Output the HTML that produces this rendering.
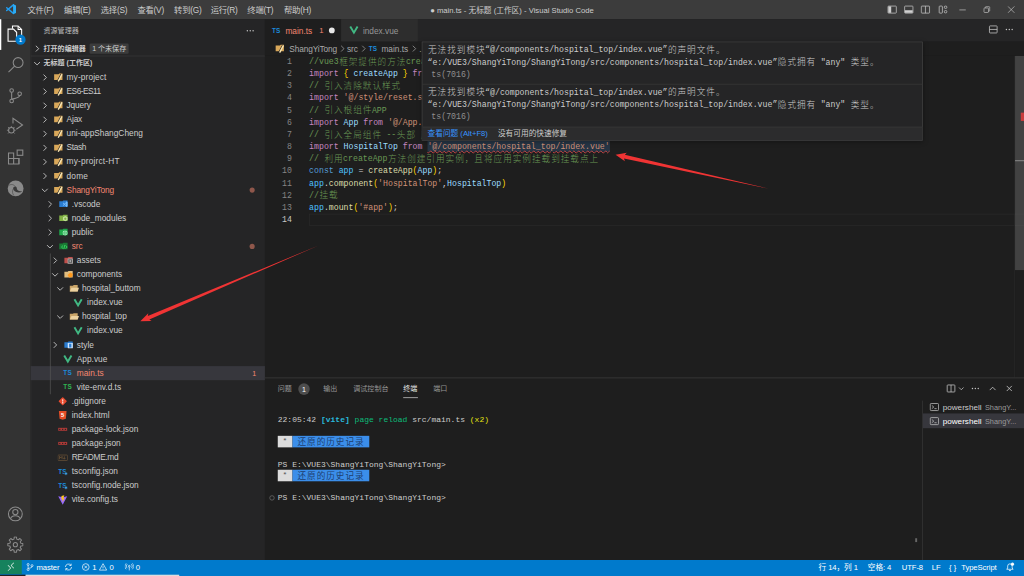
<!DOCTYPE html>
<html lang="zh-CN"><head><meta charset="utf-8"><title>main.ts - Visual Studio Code</title>
<style>
*{box-sizing:border-box;margin:0;padding:0}
html,body{width:1024px;height:576px;overflow:hidden;background:#1e1e1e}
body{font-family:"Liberation Sans","Noto Sans CJK SC",sans-serif;font-size:13px;color:#ccc}
#root{position:absolute;left:0;top:0;width:1600px;height:900px;transform:scale(.64);transform-origin:0 0;overflow:hidden;background:#1e1e1e}
.abs{position:absolute}
.mono{font-family:"Liberation Mono","Noto Sans CJK SC",monospace}
#title{position:absolute;left:0;top:0;width:1600px;height:30px;background:#3c3c3c;color:#ccc}
#title .menu{position:absolute;top:0;height:30px;line-height:31px;font-size:13px;white-space:nowrap;letter-spacing:-.4px}
#title .wt{position:absolute;top:0;left:0;width:1600px;text-align:center;line-height:32px;font-size:12px;color:#ccc;white-space:nowrap}
#act{position:absolute;left:0;top:30px;width:48px;height:845px;background:#333}
#side{position:absolute;left:48px;top:30px;width:366px;height:845px;background:#252526}
.row{position:absolute;left:0;width:366px;height:22px;line-height:22px;white-space:nowrap;font-size:13px;color:#ccc}
.row .lb{position:absolute;top:0}
.row .ic{position:absolute;top:3px;width:16px;height:16px}
.row .tw{position:absolute;top:3px;width:16px;height:16px}
#tabs{position:absolute;left:414px;top:30px;width:1186px;height:35px;background:#252526}
.tab{position:absolute;top:0;height:35px;line-height:37px;font-size:13px;white-space:nowrap}
#bc{position:absolute;left:414px;top:65px;width:1186px;height:22px;background:#1e1e1e;line-height:24px;font-size:13px;color:#a9a9a9;white-space:nowrap}
#ed{position:absolute;left:414px;top:87px;width:1186px;height:503px;background:#1e1e1e;overflow:hidden}
.ln{position:absolute;left:0;width:42px;text-align:right;height:19px;line-height:20px;font-size:12.8px;color:#858585;letter-spacing:-.02px}
.cl{position:absolute;left:69px;height:19px;line-height:20px;font-size:12.83px;white-space:pre;color:#d4d4d4}
.cl .cj{font-family:"Noto Sans CJK SC",sans-serif;font-weight:300;font-size:13.5px;position:relative;top:-1px;display:inline-block;width:15px;text-align:center;line-height:19px;vertical-align:top}
.k{color:#c586c0}.c{color:#6a9955}.v{color:#9cdcfe}.s{color:#ce9178}.f{color:#dcdcaa}.b{color:#569cd6}.g{color:#ffd700}.n{color:#4fc1ff}
#hover{position:absolute;left:659px;top:65px;width:783px;height:155px;background:#252526;border:1px solid #454545;color:#ccc;box-shadow:0 2px 8px rgba(0,0,0,.36)}
.hl{position:absolute;left:8px;height:19px;line-height:19px;font-size:12.83px;white-space:pre;color:#ccc}
.hl .cj{font-family:"Noto Sans CJK SC",sans-serif;font-weight:300;font-size:13.5px;position:relative;top:-1px;display:inline-block;width:15px;text-align:center;vertical-align:top}
#panel{position:absolute;left:414px;top:590px;width:1186px;height:285px;background:#1e1e1e;border-top:1px solid #444}
.pt{position:absolute;top:0;height:35px;line-height:33px;font-size:11px;color:#969696;white-space:nowrap}
.tl{position:absolute;left:20px;height:17.6px;line-height:17.6px;font-size:12.5px;white-space:pre;color:#ccc}
.tl .cj{font-family:"Noto Sans CJK SC",sans-serif;font-size:13.5px;display:inline-block;width:15px;height:17.6px;line-height:16.600px;text-align:center;vertical-align:top}
.tl .bg{display:inline-block;height:17.6px;line-height:17.6px;vertical-align:top}
#status{position:absolute;left:0;top:875px;width:1600px;height:25px;letter-spacing:-.15px;background:#007acc;color:#fff;font-size:12px;line-height:22px;white-space:nowrap}
#status .it{position:absolute;top:0;height:22px}
</style></head>
<body>
<div id="root">
<div id="title">
<svg class="abs" style="left:8.800px;top:6.300px" width="16.600" height="16.600" viewBox="0 0 100 100"><path d="M72 10L9 63M72 90L9 37" stroke="#1f9cf0" stroke-width="14" fill="none" stroke-linecap="round"/><path fill="#2aacf6" d="M69 2L97 15V85L69 98Z"/></svg>
<div class="menu" style="left:43.0px">文件(F)</div><div class="menu" style="left:100.2px">编辑(E)</div><div class="menu" style="left:157.5px">选择(S)</div><div class="menu" style="left:214.8px">查看(V)</div><div class="menu" style="left:272.0px">转到(G)</div><div class="menu" style="left:329.2px">运行(R)</div><div class="menu" style="left:386.5px">终端(T)</div><div class="menu" style="left:443.8px">帮助(H)</div>
<div class="wt">● main.ts - 无标题 (工作区) - Visual Studio Code</div>
<svg class="abs" style="left:1386px;top:7px" width="16" height="16" viewBox="0 0 16 16" fill="none" stroke="#d0d0d0" stroke-width="1.1"><rect x="1.5" y="2.5" width="13" height="11" rx="1"/><rect x="2" y="3" width="4.5" height="10" fill="#d0d0d0" stroke="none"/></svg><svg class="abs" style="left:1412px;top:7px" width="16" height="16" viewBox="0 0 16 16" fill="none" stroke="#d0d0d0" stroke-width="1.1"><rect x="1.5" y="2.5" width="13" height="11" rx="1"/><rect x="2" y="9" width="12" height="4" fill="#d0d0d0" stroke="none"/></svg><svg class="abs" style="left:1438px;top:7px" width="16" height="16" viewBox="0 0 16 16" fill="none" stroke="#d0d0d0" stroke-width="1.1"><rect x="1.5" y="2.5" width="13" height="11" rx="1"/><path d="M8 2.5V13.5"/></svg><svg class="abs" style="left:1465px;top:7px" width="16" height="16" viewBox="0 0 16 16" fill="none" stroke="#d0d0d0" stroke-width="1.1"><rect x="2.5" y="2.5" width="5" height="11" rx="1"/><rect x="10.5" y="2.5" width="4" height="3.6" rx="1.5"/><rect x="10.5" y="9.5" width="4" height="3.6" rx="1.5"/></svg><svg class="abs" style="left:1498px;top:9px" width="12" height="12" viewBox="0 0 12 12" stroke="#ccc" stroke-width="1" fill="none"><path d="M1 6.5H11"/></svg><svg class="abs" style="left:1536px;top:9px" width="12" height="12" viewBox="0 0 12 12" stroke="#ccc" stroke-width="1" fill="none"><rect x="1.5" y="3.5" width="7" height="7" rx="1"/><path d="M3.5 3.5V2.5a1 1 0 0 1 1-1H9.5a1 1 0 0 1 1 1V7.5a1 1 0 0 1 -1 1H8.5"/></svg><svg class="abs" style="left:1574px;top:9px" width="12" height="12" viewBox="0 0 12 12" stroke="#ccc" stroke-width="1" fill="none"><path d="M1 1L11 11M11 1L1 11"/></svg>
</div>
<div id="act">
<div class="abs" style="left:0;top:0;width:2px;height:48px;background:#fff"></div>
<svg class="abs" style="left:0;top:0" width="48" height="320" viewBox="0 0 48 320" fill="none" stroke="#8a8a8a" stroke-width="1.700"><path stroke="#fff" d="M19.500 15V10.600H28.300L33.800 16.100V30.600H26.200"/><path stroke="#fff" d="M28.300 10.600V16.100H33.800"/><path stroke="#fff" d="M12.600 15.500H21L26 20.500V34.500H12.600Z"/><circle cx="28.300" cy="67.800" r="7.700"/><path d="M22.800 73.300L13.300 82.800"/><circle cx="18.200" cy="111.400" r="2.800"/><circle cx="18.200" cy="127.800" r="2.800"/><circle cx="30.700" cy="116.600" r="2.800"/><path d="M18.200 114.200V125M30.700 119.400C30.700 123 24 123.500 18.800 125"/><path d="M20.300 163V154.900L35.200 165.300L25.500 172"/><circle cx="17.700" cy="173.500" r="4.300"/><path d="M17.700 169.200V166.800M13.400 173.500H10.800M22 173.500H24.600M14.600 170.400L12.600 168.400M20.800 170.400L22.800 168.400M14.600 176.600L12.600 178.600M20.800 176.600L22.800 178.600" stroke-width="1.300"/><path d="M13.300 209H21.300V226.200H13.300ZM13.300 217.600H29.600V226.200H21.300"/><path d="M21.300 217.600H29.600V226.200"/><rect x="26.800" y="204.500" width="8.800" height="8.200"/></svg>
<div class="abs" style="left:24px;top:24px;width:16px;height:16px;border-radius:8px;background:#007acc;color:#fff;font-size:9px;line-height:16px;text-align:center;font-weight:bold">1</div>
<svg class="abs" style="left:6.250px;top:245px" width="37.500" height="37.500" viewBox="0 0 24 24"><circle cx="11.800" cy="12.400" r="7.900" fill="#8a8a8a"/><path fill="#3a3a3a" d="M9.300 12.600C9.300 11 10.800 10.200 12.200 10.800C13 11.200 13 12.200 13.100 13C13.400 14.600 15.500 15.600 18.700 15.500C16.500 16.900 13.500 16.700 11.800 15.700C10.300 14.800 9.300 13.800 9.300 12.600Z"/><path fill="none" stroke="#444" stroke-width=".600" d="M4.600 9.700C6.500 8.100 9.500 8 11.300 10.300M9.300 13C8.300 15 8.500 17.500 9.900 19.300"/></svg>
<svg class="abs" style="left:10px;top:759px" width="28" height="28" viewBox="0 0 24 24" fill="none" stroke="#8a8a8a" stroke-width="1.450"><circle cx="12" cy="12" r="9.25"/><circle cx="12" cy="9.5" r="3.5"/><path d="M5.500 18.500C6.500 15.500 9 14.500 12 14.500S17.500 15.500 18.500 18.500"/></svg>
<svg class="abs" style="left:11px;top:808px" width="26" height="26" viewBox="0 0 24 24" fill="none" stroke="#8a8a8a" stroke-width="1.500" stroke-linejoin="round"><circle cx="12" cy="12" r="3"/><path d="M19.96 10.02L22.88 10.36L22.88 13.64L19.96 13.98L19.03 16.23L20.85 18.54L18.54 20.85L16.23 19.03L13.98 19.96L13.64 22.88L10.36 22.88L10.02 19.96L7.77 19.03L5.46 20.85L3.15 18.54L4.97 16.23L4.04 13.98L1.12 13.64L1.12 10.36L4.04 10.02L4.97 7.77L3.15 5.46L5.46 3.15L7.77 4.97L10.02 4.04L10.36 1.12L13.64 1.12L13.98 4.04L16.23 4.97L18.54 3.15L20.85 5.46L19.03 7.77Z"/></svg>
</div>
<div id="side">
<div class="abs" style="left:0;top:0;width:1px;height:845px;background:#303031"></div>
<div class="abs" style="left:20px;top:0;height:35px;line-height:35px;font-size:11px;color:#bbb">资源管理器</div>
<svg class="abs" style="left:335px;top:10px" width="16" height="16" viewBox="0 0 16 16" fill="#c5c5c5"><circle cx="3.500" cy="8" r="1.100"/><circle cx="8" cy="8" r="1.100"/><circle cx="12.500" cy="8" r="1.100"/></svg>
<div class="row" style="top:35px;font-size:11px;font-weight:bold;color:#ccc"><svg class="tw" style="left:2px" viewBox="0 0 16 16" fill="none" stroke="#c8c8c8" stroke-width="1.400"><path d="M6 3.500L10.500 8L6 12.500"/></svg><span class="lb" style="left:20px">打开的编辑器</span><span class="abs" style="left:92px;top:3px;height:16px;line-height:16px;padding:0 4px;background:#3c3c3c;color:#ccc;font-weight:normal;font-size:11px;border-radius:2px">1 个未保存</span></div>
<div class="abs" style="left:0;top:57px;width:366px;height:1px;background:#3a3a3b"></div>
<div class="row" style="top:58px;line-height:20px;font-size:11px;font-weight:bold;color:#ccc"><svg class="tw" style="left:2px" viewBox="0 0 16 16" fill="none" stroke="#c8c8c8" stroke-width="1.400"><path d="M3.500 6L8 10.500L12.500 6"/></svg><span class="lb" style="left:20px">无标题 (工作区)</span></div>
<div class="row" style="top:80px"><svg class="tw" style="left:14px" viewBox="0 0 16 16" fill="none" stroke="#c8c8c8" stroke-width="1.400"><path d="M6 3.500L10.500 8L6 12.500"/></svg><svg class="ic" style="left:36px" viewBox="0 0 16 16"><path fill="#d9a85a" d="M.6 3.200H7.500L8.500 2H13.600V12H.6Z"/><path stroke="#252526" stroke-width="1.400" d="M11.300 2.600L5.900 13"/><path stroke="#f8e6b4" stroke-width="2.100" d="M12.800 3L7 14.200"/></svg><span class="lb" style="left:56px;color:#ccc;letter-spacing:0.18px">my-project</span></div>
<div class="row" style="top:102px"><svg class="tw" style="left:14px" viewBox="0 0 16 16" fill="none" stroke="#c8c8c8" stroke-width="1.400"><path d="M6 3.500L10.500 8L6 12.500"/></svg><svg class="ic" style="left:36px" viewBox="0 0 16 16"><path fill="#d9a85a" d="M.6 3.200H7.500L8.500 2H13.600V12H.6Z"/><path stroke="#252526" stroke-width="1.400" d="M11.300 2.600L5.900 13"/><path stroke="#f8e6b4" stroke-width="2.100" d="M12.800 3L7 14.200"/></svg><span class="lb" style="left:56px;color:#ccc;letter-spacing:-0.80px">ES6-ES11</span></div>
<div class="row" style="top:124px"><svg class="tw" style="left:14px" viewBox="0 0 16 16" fill="none" stroke="#c8c8c8" stroke-width="1.400"><path d="M6 3.500L10.500 8L6 12.500"/></svg><svg class="ic" style="left:36px" viewBox="0 0 16 16"><path fill="#d9a85a" d="M.6 3.200H7.500L8.500 2H13.600V12H.6Z"/><path stroke="#252526" stroke-width="1.400" d="M11.300 2.600L5.900 13"/><path stroke="#f8e6b4" stroke-width="2.100" d="M12.800 3L7 14.200"/></svg><span class="lb" style="left:56px;color:#ccc;letter-spacing:-0.23px">Jquery</span></div>
<div class="row" style="top:146px"><svg class="tw" style="left:14px" viewBox="0 0 16 16" fill="none" stroke="#c8c8c8" stroke-width="1.400"><path d="M6 3.500L10.500 8L6 12.500"/></svg><svg class="ic" style="left:36px" viewBox="0 0 16 16"><path fill="#d9a85a" d="M.6 3.200H7.500L8.500 2H13.600V12H.6Z"/><path stroke="#252526" stroke-width="1.400" d="M11.300 2.600L5.900 13"/><path stroke="#f8e6b4" stroke-width="2.100" d="M12.800 3L7 14.200"/></svg><span class="lb" style="left:56px;color:#ccc;letter-spacing:-0.25px">Ajax</span></div>
<div class="row" style="top:168px"><svg class="tw" style="left:14px" viewBox="0 0 16 16" fill="none" stroke="#c8c8c8" stroke-width="1.400"><path d="M6 3.500L10.500 8L6 12.500"/></svg><svg class="ic" style="left:36px" viewBox="0 0 16 16"><path fill="#d9a85a" d="M.6 3.200H7.500L8.500 2H13.600V12H.6Z"/><path stroke="#252526" stroke-width="1.400" d="M11.300 2.600L5.900 13"/><path stroke="#f8e6b4" stroke-width="2.100" d="M12.800 3L7 14.200"/></svg><span class="lb" style="left:56px;color:#ccc">uni-appShangCheng</span></div>
<div class="row" style="top:190px"><svg class="tw" style="left:14px" viewBox="0 0 16 16" fill="none" stroke="#c8c8c8" stroke-width="1.400"><path d="M6 3.500L10.500 8L6 12.500"/></svg><svg class="ic" style="left:36px" viewBox="0 0 16 16"><path fill="#d9a85a" d="M.6 3.200H7.500L8.500 2H13.600V12H.6Z"/><path stroke="#252526" stroke-width="1.400" d="M11.300 2.600L5.900 13"/><path stroke="#f8e6b4" stroke-width="2.100" d="M12.800 3L7 14.200"/></svg><span class="lb" style="left:56px;color:#ccc;letter-spacing:-0.60px">Stash</span></div>
<div class="row" style="top:212px"><svg class="tw" style="left:14px" viewBox="0 0 16 16" fill="none" stroke="#c8c8c8" stroke-width="1.400"><path d="M6 3.500L10.500 8L6 12.500"/></svg><svg class="ic" style="left:36px" viewBox="0 0 16 16"><path fill="#d9a85a" d="M.6 3.200H7.500L8.500 2H13.600V12H.6Z"/><path stroke="#252526" stroke-width="1.400" d="M11.300 2.600L5.900 13"/><path stroke="#f8e6b4" stroke-width="2.100" d="M12.800 3L7 14.200"/></svg><span class="lb" style="left:56px;color:#ccc;letter-spacing:0.27px">my-projrct-HT</span></div>
<div class="row" style="top:234px"><svg class="tw" style="left:14px" viewBox="0 0 16 16" fill="none" stroke="#c8c8c8" stroke-width="1.400"><path d="M6 3.500L10.500 8L6 12.500"/></svg><svg class="ic" style="left:36px" viewBox="0 0 16 16"><path fill="#d9a85a" d="M.6 3.200H7.500L8.500 2H13.600V12H.6Z"/><path stroke="#252526" stroke-width="1.400" d="M11.300 2.600L5.900 13"/><path stroke="#f8e6b4" stroke-width="2.100" d="M12.800 3L7 14.200"/></svg><span class="lb" style="left:56px;color:#ccc;letter-spacing:0.25px">dome</span></div>
<div class="row" style="top:256px"><svg class="tw" style="left:14px" viewBox="0 0 16 16" fill="none" stroke="#c8c8c8" stroke-width="1.400"><path d="M3.500 6L8 10.500L12.500 6"/></svg><svg class="ic" style="left:36px" viewBox="0 0 16 16"><path fill="#d9a85a" d="M.6 3.200H7.500L8.500 2H13.600V12H.6Z"/><path stroke="#252526" stroke-width="1.400" d="M11.300 2.600L5.900 13"/><path stroke="#f8e6b4" stroke-width="2.100" d="M12.800 3L7 14.200"/></svg><span class="lb" style="left:56px;color:#f48771;letter-spacing:-0.26px">ShangYiTong</span><span class="abs" style="left:341.500px;top:6.500px;width:8px;height:8px;border-radius:4px;background:#8f574b"></span></div>
<div class="row" style="top:278px"><svg class="tw" style="left:22px" viewBox="0 0 16 16" fill="none" stroke="#c8c8c8" stroke-width="1.400"><path d="M6 3.500L10.500 8L6 12.500"/></svg><svg class="ic" style="left:44px" viewBox="0 0 16 16"><path fill="#2a7cd0" d="M.6 3.600H5.800L7 2.400H13.600V12.400H.6Z"/><path fill="none" stroke="#7cc0ff" stroke-width="1.500" d="M12 5L6.500 10.200M12 11.200L6.500 6"/><path fill="#7cc0ff" d="M11.300 3.800L13.600 4.800V11.400L11.300 12.400Z"/></svg><span class="lb" style="left:64px;color:#ccc">.vscode</span></div>
<div class="row" style="top:300px"><svg class="tw" style="left:22px" viewBox="0 0 16 16" fill="none" stroke="#c8c8c8" stroke-width="1.400"><path d="M6 3.500L10.500 8L6 12.500"/></svg><svg class="ic" style="left:44px" viewBox="0 0 16 16"><path fill="#83b246" d="M.6 3.600H5.800L7 2.400H13.600V12.400H.6Z"/><path fill="#c3e29a" d="M10 4.600L13.600 6.600V10.800L10 12.800L6.400 10.800V6.600Z"/><path fill="#83b246" d="M10 6.800L11.600 7.700V9.700L10 10.600L8.400 9.700V7.700Z"/></svg><span class="lb" style="left:64px;color:#ccc">node_modules</span></div>
<div class="row" style="top:322px"><svg class="tw" style="left:22px" viewBox="0 0 16 16" fill="none" stroke="#c8c8c8" stroke-width="1.400"><path d="M6 3.500L10.500 8L6 12.500"/></svg><svg class="ic" style="left:44px" viewBox="0 0 16 16"><path fill="#1fa74a" d="M.6 3.600H5.800L7 2.400H13.600V12.400H.6Z"/><circle cx="9.800" cy="9" r="3.900" fill="#a9f0bf"/><path stroke="#1fa74a" stroke-width=".8" fill="none" d="M6 9H13.600M9.800 5.200C7.600 7 7.600 11 9.800 12.800C12 11 12 7 9.800 5.200"/></svg><span class="lb" style="left:64px;color:#ccc">public</span></div>
<div class="row" style="top:344px"><svg class="tw" style="left:22px" viewBox="0 0 16 16" fill="none" stroke="#c8c8c8" stroke-width="1.400"><path d="M3.500 6L8 10.500L12.500 6"/></svg><svg class="ic" style="left:44px" viewBox="0 0 16 16"><path fill="#1a7a34" d="M.6 3.600H5.800L7 2.400H13.600V12.400H.6Z"/><path fill="none" stroke="#35d15f" stroke-width="1.500" d="M6.600 6.600L4 9L6.600 11.400M10.400 6.600L13 9L10.400 11.400M9.300 5.800L7.700 12.200"/></svg><span class="lb" style="left:64px;color:#f48771">src</span><span class="abs" style="left:341.500px;top:6.500px;width:8px;height:8px;border-radius:4px;background:#8f574b"></span></div>
<div class="row" style="top:366px"><svg class="tw" style="left:30px" viewBox="0 0 16 16" fill="none" stroke="#c8c8c8" stroke-width="1.400"><path d="M6 3.500L10.500 8L6 12.500"/></svg><svg class="ic" style="left:52px" viewBox="0 0 16 16"><path fill="#c04f4b" d="M.6 3.600H5.800L7 2.400H13.600V12.400H.6Z"/><rect x="5.600" y="5" width="8.400" height="8" rx=".8" fill="#a8a8a8"/><rect x="7" y="6.400" width="5.600" height="5.200" fill="#555"/><circle cx="9.800" cy="9" r="1.600" fill="#a8a8a8"/></svg><span class="lb" style="left:72px;color:#ccc">assets</span></div>
<div class="row" style="top:388px"><svg class="tw" style="left:30px" viewBox="0 0 16 16" fill="none" stroke="#c8c8c8" stroke-width="1.400"><path d="M3.500 6L8 10.500L12.500 6"/></svg><svg class="ic" style="left:52px" viewBox="0 0 16 16"><path fill="#e2bd7e" d="M.6 3.600H5.800L7 2.400H13.600V12.400H.6Z"/><path fill="#ff9a1f" d="M9.800 4.600L13.800 7.200L12.600 11.800L8 12.600L5.600 8.600Z"/></svg><span class="lb" style="left:72px;color:#ccc">components</span></div>
<div class="row" style="top:410px"><svg class="tw" style="left:38px" viewBox="0 0 16 16" fill="none" stroke="#c8c8c8" stroke-width="1.400"><path d="M3.500 6L8 10.500L12.500 6"/></svg><svg class="ic" style="left:60px" viewBox="0 0 16 16"><path fill="#c9a468" d="M1 3.400H6L7.200 2.400H13.400V12.400H1Z"/><path fill="#ecd2a0" d="M3.600 6.600H15.400L13.400 12.400H1Z"/></svg><span class="lb" style="left:80px;color:#ccc">hospital_buttom</span></div>
<div class="row" style="top:432px"><svg class="ic" style="left:66px" viewBox="0 0 16 16"><path fill="none" stroke="#41b883" stroke-width="3" stroke-linejoin="miter" d="M2.300 2.500L8 12L13.700 2.500"/></svg><span class="lb" style="left:88px;color:#ccc">index.vue</span></div>
<div class="row" style="top:454px"><svg class="tw" style="left:38px" viewBox="0 0 16 16" fill="none" stroke="#c8c8c8" stroke-width="1.400"><path d="M3.500 6L8 10.500L12.500 6"/></svg><svg class="ic" style="left:60px" viewBox="0 0 16 16"><path fill="#c9a468" d="M1 3.400H6L7.200 2.400H13.400V12.400H1Z"/><path fill="#ecd2a0" d="M3.600 6.600H15.400L13.400 12.400H1Z"/></svg><span class="lb" style="left:80px;color:#ccc">hospital_top</span></div>
<div class="row" style="top:476px"><svg class="ic" style="left:66px" viewBox="0 0 16 16"><path fill="none" stroke="#41b883" stroke-width="3" stroke-linejoin="miter" d="M2.300 2.500L8 12L13.700 2.500"/></svg><span class="lb" style="left:88px;color:#ccc">index.vue</span></div>
<div class="row" style="top:498px"><svg class="tw" style="left:30px" viewBox="0 0 16 16" fill="none" stroke="#c8c8c8" stroke-width="1.400"><path d="M6 3.500L10.500 8L6 12.500"/></svg><svg class="ic" style="left:52px" viewBox="0 0 16 16"><path fill="#2a7cd0" d="M.6 3.600H5.800L7 2.400H13.600V12.400H.6Z"/><rect x="5.800" y="4.800" width="8" height="8.400" rx="1" fill="#cfe6ff"/><rect x="8" y="6" width="3.600" height="6" fill="#2a7cd0"/></svg><span class="lb" style="left:72px;color:#ccc">style</span></div>
<div class="row" style="top:520px"><svg class="ic" style="left:50px" viewBox="0 0 16 16"><path fill="none" stroke="#41b883" stroke-width="3" stroke-linejoin="miter" d="M2.300 2.500L8 12L13.700 2.500"/></svg><span class="lb" style="left:72px;color:#ccc">App.vue</span></div>
<div class="row" style="top:542px;background:#37373d"><span class="abs" style="left:51px;top:0;font-size:10px;font-weight:bold;color:#1c8adb;letter-spacing:.3px">TS</span><span class="lb" style="left:72px;color:#f48771">main.ts</span><span class="abs" style="left:346px;top:0;font-size:11px;color:#f48771">1</span></div>
<div class="row" style="top:564px"><span class="abs" style="left:51px;top:0;font-size:10px;font-weight:bold;color:#2fb552;letter-spacing:.3px">TS</span><span class="lb" style="left:72px;color:#ccc">vite-env.d.ts</span></div>
<div class="row" style="top:586px"><svg class="ic" style="left:42px" viewBox="0 0 16 16"><rect x="3.200" y="3.200" width="9.600" height="9.600" rx="1.200" transform="rotate(45 8 8)" fill="#e64a2e"/><circle cx="8" cy="6" r="1" fill="#fff"/><circle cx="8" cy="10.500" r="1" fill="#fff"/><path d="M8 6V10.500" stroke="#fff" stroke-width=".9"/></svg><span class="lb" style="left:64px;color:#ccc">.gitignore</span></div>
<div class="row" style="top:608px"><svg class="ic" style="left:42px" viewBox="0 0 16 16"><path fill="#e44d26" d="M2 1h12l-1.100 12.200L8 15l-4.900-1.800z"/><text x="8" y="11" font-size="9" font-weight="bold" text-anchor="middle" fill="#fff" font-family="Liberation Sans,sans-serif">5</text></svg><span class="lb" style="left:64px;color:#ccc">index.html</span></div>
<div class="row" style="top:630px"><svg class="ic" style="left:42px" viewBox="0 0 16 16"><rect x="1" y="5.500" width="14" height="4.600" fill="#b03a37"/><rect x="2.500" y="7" width="1.800" height="1.800" fill="#252526"/><rect x="7" y="7" width="1.800" height="1.800" fill="#252526"/><rect x="11.200" y="7" width="2" height="1.800" fill="#252526"/></svg><span class="lb" style="left:64px;color:#ccc">package-lock.json</span></div>
<div class="row" style="top:652px"><svg class="ic" style="left:42px" viewBox="0 0 16 16"><rect x="1" y="5.500" width="14" height="4.600" fill="#b03a37"/><rect x="2.500" y="7" width="1.800" height="1.800" fill="#252526"/><rect x="7" y="7" width="1.800" height="1.800" fill="#252526"/><rect x="11.200" y="7" width="2" height="1.800" fill="#252526"/></svg><span class="lb" style="left:64px;color:#ccc">package.json</span></div>
<div class="row" style="top:674px"><svg class="ic" style="left:42px" viewBox="0 0 16 16"><rect x=".5" y="4" width="15" height="8.500" rx="1" fill="none" stroke="#755838" stroke-width="1"/><path d="M3 10.500V6l2 2.500L7 6v4.500M10.500 6v4M8.800 8.500l1.700 2 1.700-2" stroke="#755838" stroke-width="1.100" fill="none"/></svg><span class="lb" style="left:64px;color:#ccc;letter-spacing:-0.50px">README.md</span></div>
<div class="row" style="top:696px"><span class="abs" style="left:43px;top:0;font-size:10px;font-weight:bold;color:#1c8adb;letter-spacing:.3px">TS</span><span class="abs" style="left:52px;top:11px;width:6px;height:6px;border-radius:3px;background:#3a9bdc;border:1px solid #252526"></span><span class="lb" style="left:64px;color:#ccc">tsconfig.json</span></div>
<div class="row" style="top:718px"><span class="abs" style="left:43px;top:0;font-size:10px;font-weight:bold;color:#1c8adb;letter-spacing:.3px">TS</span><span class="abs" style="left:52px;top:11px;width:6px;height:6px;border-radius:3px;background:#3a9bdc;border:1px solid #252526"></span><span class="lb" style="left:64px;color:#ccc">tsconfig.node.json</span></div>
<div class="row" style="top:740px"><svg class="ic" style="left:42px" viewBox="0 0 16 16"><path fill="#9466ff" d="M1 2.500L8 15.500L15 2.500L8 4z"/><path fill="#ffc820" d="M10.500 1L6 2v5.500h2L7.500 12l3.500-6.500H9z"/></svg><span class="lb" style="left:64px;color:#ccc">vite.config.ts</span></div>
<div class="abs" style="left:30px;top:366px;width:1px;height:220px;background:#585858"></div>
</div>
<div id="tabs">
<div class="tab" style="left:0;width:119px;background:#1e1e1e"><span class="abs" style="left:11px;top:0;font-size:10px;font-weight:bold;color:#1c8adb;letter-spacing:.3px">TS</span><span class="abs" style="left:32px;color:#f48771">main.ts</span><span class="abs" style="left:85px;color:#f48771;font-size:12px">1</span><span class="abs" style="left:100px;top:13px;width:9px;height:9px;border-radius:5px;background:#e8e8e8"></span></div>
<div class="tab" style="left:119px;width:120px;background:#2d2d2d"><svg class="abs" style="left:12px;top:9px" width="16" height="16" viewBox="0 0 16 16"><path fill="none" stroke="#41b883" stroke-width="3" d="M2.300 2.500L8 12L13.700 2.500"/></svg><span class="abs" style="left:34px;color:#969696">index.vue</span></div>
<svg class="abs" style="left:1130px;top:8px" width="16" height="16" viewBox="0 0 16 16" fill="none" stroke="#c5c5c5" stroke-width="1.200"><rect x="2" y="2.500" width="12" height="11" rx="1"/><path d="M2 8H14"/></svg><svg class="abs" style="left:1155px;top:8px" width="16" height="16" viewBox="0 0 16 16" fill="#c5c5c5"><circle cx="3.500" cy="8" r="1.100"/><circle cx="8" cy="8" r="1.100"/><circle cx="12.500" cy="8" r="1.100"/></svg>
</div>
<div id="bc"><svg class="abs" style="left:16px;top:3px" width="16" height="16" viewBox="0 0 16 16"><path fill="#d9a85a" d="M.6 3.200H7.500L8.500 2H13.600V12H.6Z"/><path stroke="#252526" stroke-width="1.400" d="M11.300 2.600L5.900 13"/><path stroke="#f8e6b4" stroke-width="2.100" d="M12.800 3L7 14.200"/></svg><span class="abs" style="left:38px;letter-spacing:-.2px">ShangYiTong</span><svg class="abs" style="left:113px;top:3px" width="16" height="16" viewBox="0 0 16 16" fill="none" stroke="#a0a0a0" stroke-width="1.200"><path d="M6 3.500L10.500 8L6 12.500"/></svg><span class="abs" style="left:128px">src</span><svg class="abs" style="left:146px;top:3px" width="16" height="16" viewBox="0 0 16 16" fill="none" stroke="#a0a0a0" stroke-width="1.200"><path d="M6 3.500L10.500 8L6 12.500"/></svg><span class="abs" style="left:162px;top:0;font-size:10px;font-weight:bold;color:#1c8adb;letter-spacing:.3px">TS</span><span class="abs" style="left:182px">main.ts</span><svg class="abs" style="left:225px;top:3px" width="16" height="16" viewBox="0 0 16 16" fill="none" stroke="#a0a0a0" stroke-width="1.200"><path d="M6 3.500L10.500 8L6 12.500"/></svg><span class="abs" style="left:241px">...</span></div>
<div id="ed">
<div class="abs" style="left:253.500px;top:133px;width:285px;height:17px;background:#263545"></div>
<div class="abs" style="left:69px;top:247px;width:1103px;height:19px;border:1px solid #2b2b2b"></div>
<div class="ln mono" style="top:0px;color:#858585">1</div><div class="cl mono" style="top:0px"><span class="c">//vue3<span class="cj">框</span><span class="cj">架</span><span class="cj">提</span><span class="cj">供</span><span class="cj">的</span><span class="cj">方</span><span class="cj">法</span>createApp<span class="cj">方</span><span class="cj">法</span><span class="cj">，</span><span class="cj">可</span><span class="cj">以</span><span class="cj">创</span><span class="cj">建</span><span class="cj">应</span><span class="cj">用</span><span class="cj">实</span><span class="cj">例</span><span class="cj">方</span><span class="cj">法</span></span></div>
<div class="ln mono" style="top:19px;color:#858585">2</div><div class="cl mono" style="top:19px"><span class="k">import</span> <span class="g">{</span> <span class="v">createApp</span> <span class="g">}</span> <span class="k">from</span> <span class="s">'vue'</span>;</div>
<div class="ln mono" style="top:38px;color:#858585">3</div><div class="cl mono" style="top:38px"><span class="c">// <span class="cj">引</span><span class="cj">入</span><span class="cj">清</span><span class="cj">除</span><span class="cj">默</span><span class="cj">认</span><span class="cj">样</span><span class="cj">式</span></span></div>
<div class="ln mono" style="top:57px;color:#858585">4</div><div class="cl mono" style="top:57px"><span class="k">import</span> <span class="s">'@/style/reset.scss'</span></div>
<div class="ln mono" style="top:76px;color:#858585">5</div><div class="cl mono" style="top:76px"><span class="c">// <span class="cj">引</span><span class="cj">入</span><span class="cj">根</span><span class="cj">组</span><span class="cj">件</span>APP</span></div>
<div class="ln mono" style="top:95px;color:#858585">6</div><div class="cl mono" style="top:95px"><span class="k">import</span> <span class="v">App</span> <span class="k">from</span> <span class="s">'@/App.vue'</span></div>
<div class="ln mono" style="top:114px;color:#858585">7</div><div class="cl mono" style="top:114px"><span class="c">// <span class="cj">引</span><span class="cj">入</span><span class="cj">全</span><span class="cj">局</span><span class="cj">组</span><span class="cj">件</span> --<span class="cj">头</span><span class="cj">部</span> <span class="cj">底</span><span class="cj">部</span></span></div>
<div class="ln mono" style="top:133px;color:#858585">8</div><div class="cl mono" style="top:133px"><span class="k">import</span> <span class="v">HospitalTop</span> <span class="k">from</span> <span class="s" style="text-decoration:underline wavy #f14c4c 1px;text-underline-offset:2px">'@/components/hospital_top/index.vue'</span></div>
<div class="ln mono" style="top:152px;color:#858585">9</div><div class="cl mono" style="top:152px"><span class="c">// <span class="cj">利</span><span class="cj">用</span>createApp<span class="cj">方</span><span class="cj">法</span><span class="cj">创</span><span class="cj">建</span><span class="cj">引</span><span class="cj">用</span><span class="cj">实</span><span class="cj">例</span><span class="cj">，</span><span class="cj">且</span><span class="cj">将</span><span class="cj">应</span><span class="cj">用</span><span class="cj">实</span><span class="cj">例</span><span class="cj">挂</span><span class="cj">载</span><span class="cj">到</span><span class="cj">挂</span><span class="cj">载</span><span class="cj">点</span><span class="cj">上</span></span></div>
<div class="ln mono" style="top:171px;color:#858585">10</div><div class="cl mono" style="top:171px"><span class="b">const</span> <span class="n">app</span> = <span class="f">createApp</span><span class="g">(</span><span class="v">App</span><span class="g">)</span>;</div>
<div class="ln mono" style="top:190px;color:#858585">11</div><div class="cl mono" style="top:190px"><span class="n">app</span>.<span class="f">component</span><span class="g">(</span><span class="s">'HospitalTop'</span>,<span class="v">HospitalTop</span><span class="g">)</span></div>
<div class="ln mono" style="top:209px;color:#858585">12</div><div class="cl mono" style="top:209px"><span class="c">//<span class="cj">挂</span><span class="cj">载</span></span></div>
<div class="ln mono" style="top:228px;color:#858585">13</div><div class="cl mono" style="top:228px"><span class="n">app</span>.<span class="f">mount</span><span class="g">(</span><span class="s">'#app'</span><span class="g">)</span>;</div>
<div class="ln mono" style="top:247px;color:#c6c6c6">14</div><div class="cl mono" style="top:247px"></div>
<div class="abs" style="left:1171px;top:0;width:1px;height:503px;background:#2a2a2a"></div>
<div class="abs" style="left:1172px;top:0;width:14px;height:335px;background:#424242"></div>
<div class="abs" style="left:1172px;top:247px;width:14px;height:1px;background:#4a4a4a"></div><div class="abs" style="left:1172px;top:265px;width:14px;height:1px;background:#4a4a4a"></div>
<div class="abs" style="left:1181px;top:89px;width:5px;height:13px;background:#c93c3c"></div>
<div class="abs" style="left:1172px;top:163px;width:14px;height:2px;background:#7a7a7a"></div>
</div>
<div id="hover">
<div class="hl mono" style="top:3px;left:8px;color:#ccc"><span class="cj">无</span><span class="cj">法</span><span class="cj">找</span><span class="cj">到</span><span class="cj">模</span><span class="cj">块</span>“@/components/hospital_top/index.vue”<span class="cj">的</span><span class="cj">声</span><span class="cj">明</span><span class="cj">文</span><span class="cj">件</span><span class="cj">。</span></div>
<div class="hl mono" style="top:22px;left:8px;color:#ccc">“e:/VUE3/ShangYiTong/ShangYiTong/src/components/hospital_top/index.vue”<span class="cj">隐</span><span class="cj">式</span><span class="cj">拥</span><span class="cj">有</span> "any" <span class="cj">类</span><span class="cj">型</span><span class="cj">。</span></div>
<div class="hl mono" style="top:41px;left:14px;color:#8f8f8f">ts(7016)</div>
<div class="hl mono" style="top:69px;left:8px;color:#ccc"><span class="cj">无</span><span class="cj">法</span><span class="cj">找</span><span class="cj">到</span><span class="cj">模</span><span class="cj">块</span>“@/components/hospital_top/index.vue”<span class="cj">的</span><span class="cj">声</span><span class="cj">明</span><span class="cj">文</span><span class="cj">件</span><span class="cj">。</span></div>
<div class="hl mono" style="top:88px;left:8px;color:#ccc">“e:/VUE3/ShangYiTong/ShangYiTong/src/components/hospital_top/index.vue”<span class="cj">隐</span><span class="cj">式</span><span class="cj">拥</span><span class="cj">有</span> "any" <span class="cj">类</span><span class="cj">型</span><span class="cj">。</span></div>
<div class="hl mono" style="top:107px;left:14px;color:#8f8f8f">ts(7016)</div>
<div class="abs" style="left:0;top:65px;width:781px;height:1px;background:#3a3a3a"></div>
<div class="abs" style="left:0;top:132px;width:781px;height:21px;background:#2c2c2d;border-top:1px solid #3a3a3a;font-size:12px;line-height:20px;white-space:nowrap"><span class="abs" style="left:8px;color:#3794ff">查看问题 (Alt+F8)</span><span class="abs" style="left:118px;color:#ccc">没有可用的快速修复</span></div>
</div>
<div id="panel">
<div class="pt" style="left:20px">问题</div><div class="abs" style="left:52px;top:8px;width:18px;height:18px;border-radius:9px;background:#4d4d4d;color:#fff;font-size:11px;line-height:18px;text-align:center">1</div><div class="pt" style="left:91px">输出</div><div class="pt" style="left:138px">调试控制台</div><div class="pt" style="left:216px;color:#e7e7e7">终端</div><div class="abs" style="left:216px;top:30px;width:23px;height:1px;background:#e7e7e7"></div><div class="pt" style="left:263px">端口</div>
<svg class="abs" style="left:1064px;top:8px" width="16" height="16" viewBox="0 0 16 16" fill="none" stroke="#c5c5c5" stroke-width="1.200"><rect x="2" y="2.500" width="12" height="11" rx="1"/><path d="M8 2.500V13.500"/></svg><svg class="abs" style="left:1082px;top:10px" width="12" height="12" viewBox="0 0 12 12" fill="none" stroke="#c5c5c5" stroke-width="1.200"><path d="M2.500 4.500L6 8L9.500 4.500"/></svg><svg class="abs" style="left:1102px;top:8px" width="16" height="16" viewBox="0 0 16 16" fill="#c5c5c5"><circle cx="3.500" cy="8" r="1.100"/><circle cx="8" cy="8" r="1.100"/><circle cx="12.500" cy="8" r="1.100"/></svg><svg class="abs" style="left:1129px;top:8px" width="16" height="16" viewBox="0 0 16 16" fill="none" stroke="#c5c5c5" stroke-width="1.300"><path d="M3.500 10.500L8 6L12.500 10.500"/></svg><svg class="abs" style="left:1155px;top:8px" width="16" height="16" viewBox="0 0 16 16" fill="none" stroke="#c5c5c5" stroke-width="1.300"><path d="M4 4L12 12M12 4L4 12"/></svg>
<div class="tl mono" style="top:58.0px">22:05:42 <b style="color:#29b8db">[vite]</b> <span style="color:#0dbc79">page reload</span> src/main.ts <span style="color:#e5e510">(x2)</span></div>
<div class="tl mono" style="top:90.2px"><span class="bg" style="background:#dcdcdc;color:#555"> * </span><span class="bg" style="background:#3b8eea;color:#1e3f70"> <span class="cj">还</span><span class="cj">原</span><span class="cj">的</span><span class="cj">历</span><span class="cj">史</span><span class="cj">记</span><span class="cj">录</span> </span></div>
<div class="tl mono" style="top:128.4px">PS E:\VUE3\ShangYiTong\ShangYiTong&gt;</div>
<div class="tl mono" style="top:143.0px"><span class="bg" style="background:#dcdcdc;color:#555"> * </span><span class="bg" style="background:#3b8eea;color:#1e3f70"> <span class="cj">还</span><span class="cj">原</span><span class="cj">的</span><span class="cj">历</span><span class="cj">史</span><span class="cj">记</span><span class="cj">录</span> </span></div>
<div class="tl mono" style="top:180.3px">PS E:\VUE3\ShangYiTong\ShangYiTong&gt;</div>
<div class="abs" style="left:7px;top:183.2px;width:8px;height:8px;border-radius:4px;border:1.500px solid #777"></div>
<div class="abs" style="left:1027px;top:35px;width:1px;height:249px;background:#3a3a3a"></div>
<div class="abs" style="left:1028px;top:33px;width:158px;height:22px;line-height:24px;font-size:12.700px;white-space:nowrap"><svg class="abs" style="left:10px;top:4px" width="16" height="16" viewBox="0 0 16 16" fill="none" stroke="#ccc" stroke-width="1.100"><rect x="1.500" y="2.500" width="13" height="11" rx="1.500"/><path d="M4 5.500L7 8L4 10.500M8 10.500H11.500"/></svg><span class="abs" style="left:31px;color:#ccc">powershell</span><span class="abs" style="left:97px;color:#9a9a9a;font-size:11.500px">ShangY...</span></div>
<div class="abs" style="left:1028px;top:55px;width:158px;height:22.500px;line-height:24px;font-size:12.700px;white-space:nowrap;background:#37373d"><svg class="abs" style="left:10px;top:4px" width="16" height="16" viewBox="0 0 16 16" fill="none" stroke="#ccc" stroke-width="1.100"><rect x="1.500" y="2.500" width="13" height="11" rx="1.500"/><path d="M4 5.500L7 8L4 10.500M8 10.500H11.500"/></svg><span class="abs" style="left:31px;color:#fff">powershell</span><span class="abs" style="left:97px;color:#9a9a9a;font-size:11.500px">ShangY...</span></div>
<div class="abs" style="left:1016px;top:250px;width:3px;height:6px;background:#666"></div>
</div>
<div id="status">
<div class="abs" style="left:0;top:23px;width:40px;height:2px;background:#222"></div><div class="abs" style="left:40px;top:23px;width:240px;height:2px;background:#ddd"></div>
<div class="it" style="left:0;width:34px;background:#16825d"><svg class="abs" style="left:9px;top:3px" width="16" height="16" viewBox="0 0 16 16" fill="#fff"><path d="M12.904 9.570L8.928 5.596l3.976-3.976-.619-.620L8 5.286v.619l4.285 4.285.620-.618zM3 5.620l4 3.976-4 4.024.620.618L8 9.905v-.619L3.620 5 3 5.620z"/></svg></div><svg class="abs" style="left:40px;top:4px" width="14" height="14" viewBox="0 0 16 16" fill="none" stroke="#fff" stroke-width="1.200"><circle cx="4.500" cy="3.500" r="1.800"/><circle cx="4.500" cy="12.500" r="1.800"/><circle cx="11.500" cy="5.500" r="1.800"/><path d="M4.500 5.300V10.700M11.500 7.300C11.500 9.500 8 9.500 4.800 10.500"/></svg><span class="it" style="left:57px">master</span><svg class="abs" style="left:100px;top:4px" width="14" height="14" viewBox="0 0 16 16" fill="none" stroke="#fff" stroke-width="1.300"><path d="M2.500 8A5.500 5.500 0 0 1 12.500 5M13.500 8A5.500 5.500 0 0 1 3.500 11M12.800 2V5.300H9.500M3.200 14V10.700H6.500"/></svg><svg class="abs" style="left:127px;top:4px" width="14" height="14" viewBox="0 0 16 16" fill="none" stroke="#fff" stroke-width="1.200"><circle cx="8" cy="8" r="6"/><path d="M5.500 5.500L10.500 10.500M10.500 5.500L5.500 10.500"/></svg><span class="it" style="left:144px">1</span><svg class="abs" style="left:154px;top:4px" width="14" height="14" viewBox="0 0 16 16" fill="none" stroke="#fff" stroke-width="1.200"><path d="M8 2L14.500 13.500H1.500Z"/><path d="M8 6.500V10M8 11V12.200"/></svg><span class="it" style="left:171px">0</span><svg class="abs" style="left:195px;top:4px" width="14" height="14" viewBox="0 0 16 16" fill="none" stroke="#fff" stroke-width="1.200"><circle cx="8" cy="6.500" r="1.500"/><path d="M8 8V14M4.500 10A4.500 4.500 0 0 1 4.500 3M11.500 3A4.500 4.500 0 0 1 11.500 10M2.500 12A7 7 0 0 1 2.500 1.500M13.500 1.500A7 7 0 0 1 13.500 12"/></svg><span class="it" style="left:212px">0</span><span class="it" style="left:1279px">行 14，列 1</span><span class="it" style="left:1356px">空格: 4</span><span class="it" style="left:1409px">UTF-8</span><span class="it" style="left:1456px">LF</span><span class="it" style="left:1483px">{ }</span><span class="it" style="left:1502px">TypeScript</span><svg class="abs" style="left:1570px;top:3px" width="16" height="16" viewBox="0 0 16 16" fill="none" stroke="#fff" stroke-width="1.200"><path d="M3 11.500H13L11.500 9.500V6.500A3.500 3.500 0 0 0 4.500 6.500V9.500ZM6.500 13.500H9.500"/><circle cx="12" cy="3.500" r="2" fill="#fff"/></svg>
</div>
<svg class="abs" style="left:0;top:0" width="1600" height="900" viewBox="0 0 1024 576"><polygon fill="#f03434" points="768.7,188.7 624.8,154.8 626.8,152.8 615.6,154.7 624.9,161.2 624.0,158.5"/><polygon fill="#f03434" points="318.7,245.4 147.8,316.0 148.3,313.2 140.3,321.3 151.6,321.1 149.3,319.5"/></svg>
</div>
</body></html>
